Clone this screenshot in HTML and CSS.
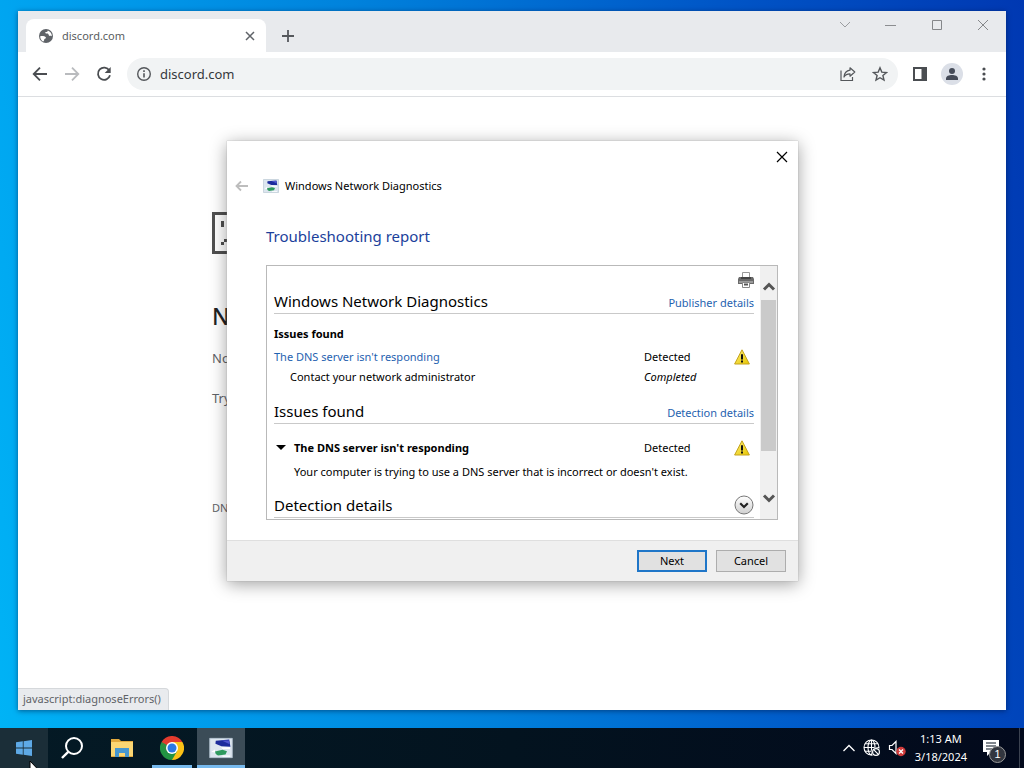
FILE: index.html
```html
<!DOCTYPE html>
<html lang="en">
<head>
<meta charset="utf-8">
<title>discord.com</title>
<link rel="stylesheet" href="styles.css">
</head>
<body>
<svg class="defs" aria-hidden="true">
  <defs>
    <linearGradient id="amber" x1="0" y1="0" x2="1" y2="1"><stop offset="0" stop-color="#fff27a"/><stop offset="1" stop-color="#e6c400"/></linearGradient>
    <linearGradient id="shine" x1="0" y1="0" x2="0" y2="1"><stop offset="0" stop-color="#fff"/><stop offset="1" stop-color="#cfcfcf"/></linearGradient>
    <symbol id="warning" viewBox="0 0 16 16">
      <path d="M8 .8 15.4 15H.6z" fill="url(#amber)" stroke="#c4a21c" stroke-width="1" stroke-linejoin="round"/>
      <path d="M7 5.200h2V10.400H7zM7 11.600h2v2H7z" fill="#111"/>
    </symbol>
    <symbol id="netdiag" viewBox="0 0 16 14">
      <path d="M.5.5h15v13H.5z" fill="#dce6ef" stroke="#b3c2cf" stroke-width=".6"/>
      <path d="M4.500 2.200 13.500 1.400l.8 4.800-6-.3-4-1.700z" fill="#1c2c9c"/>
      <path d="M8.500 2h4.800l.5 2.500z" fill="#4e55cf"/>
      <path d="M8 6.500h6v1.200H9z" fill="#fff"/>
      <path d="M4 9.300 9 8.200l3 .9-1 2.200-5 .7-1.500-1z" fill="#2f9a5e"/>
      <path d="M1.500 9.500 4 8v2zM9 12h5v.8H9z" fill="#fff"/>
    </symbol>
  </defs>
</svg>

<main class="desktop">
  <section class="browser" aria-label="Browser">
    <header class="tabstrip">
      <div class="tab">
        <svg class="i16" viewBox="0 0 16 16"><circle cx="8" cy="8" r="7" fill="#5f6368"/><path d="M2.200 8.300c2-.4 4.300-.2 5.300.8.9.9.3 1.500-.6 1.600-.9.200-.5 1.200-1 2.100-.2.400-.6.700-1 .6-1.700-1.100-2.800-3-2.700-5.100zM9.800 2.400c-.1 1.100-.9 1.600-1.900 1.600-.8 0-.9.800-.3 1.200.8.500 1.500 0 2.200.3 1 .5.600 1.700 1.500 2.200.8.400 1.800 0 2.500.6.300-2.700-1.500-5.100-4-5.900z" fill="#fff"/></svg>
        <span class="tab-name">discord.com</span>
        <button class="plain" aria-label="Close tab"><svg class="i10" viewBox="0 0 10 10"><path d="M1 1l8 8M9 1 1 9" stroke="#5f6368" stroke-width="1.500"/></svg></button>
      </div>
      <button class="plain add" aria-label="New tab"><svg class="i14" viewBox="0 0 14 14"><path d="M7 1v12M1 7h12" stroke="#55585c" stroke-width="1.800"/></svg></button>
      <div class="wincontrols">
        <button class="plain" aria-label="Search tabs"><svg class="i12" viewBox="0 0 12 12"><path d="M1 3l5 5 5-5" fill="none" stroke="#9b9da0"/></svg></button>
        <button class="plain" aria-label="Minimize"><svg class="i12" viewBox="0 0 12 12"><path d="M0 6.500h11" stroke="#8b8d90"/></svg></button>
        <button class="plain" aria-label="Maximize"><svg class="i12" viewBox="0 0 12 12"><path d="M1.500 1.500h9v9h-9z" fill="none" stroke="#85878a"/></svg></button>
        <button class="plain" aria-label="Close"><svg class="i12" viewBox="0 0 12 12"><path d="M1 1l10 10M11 1 1 11" stroke="#85878a"/></svg></button>
      </div>
    </header>

    <nav class="toolbar">
      <div class="navbuttons">
        <button class="plain" aria-label="Back"><svg class="i16" viewBox="0 0 16 16"><path d="M15 8H2M8 1.700 1.700 8 8 14.300" fill="none" stroke="#4a4d51" stroke-width="1.800"/></svg></button>
        <button class="plain" aria-label="Forward"><svg class="i16" viewBox="0 0 16 16"><path d="M1 8h13M8 1.700 14.300 8 8 14.300" fill="none" stroke="#b9bbbe" stroke-width="1.800"/></svg></button>
        <button class="plain" aria-label="Reload"><svg class="i16" viewBox="0 0 16 16"><path d="M13.300 4.500A6.100 6.100 0 1 0 14 9.300" fill="none" stroke="#4a4d51" stroke-width="1.800"/><path d="M14.700 1v6H8.700z" fill="#4a4d51"/></svg></button>
      </div>
      <div class="omnibox">
        <svg class="i16" viewBox="0 0 16 16"><circle cx="8" cy="8" r="6.300" fill="none" stroke="#54575b" stroke-width="1.400"/><path d="M8 7.200v4.200M8 4.300v1.600" stroke="#54575b" stroke-width="1.600"/></svg>
        <input class="url" aria-label="Address" value="discord.com">
        <button class="plain" aria-label="Share"><svg class="i16" viewBox="0 0 16 16"><path d="M1 4.500v10h11.500V11" fill="none" stroke="#54575b" stroke-width="1.200"/><path d="M10 1.800 14.800 6 10 10.200V7.900C7.200 7.900 5.300 8.800 4 11c.3-3.500 2.500-6.300 6-6.800z" fill="none" stroke="#54575b" stroke-width="1.200" stroke-linejoin="round"/></svg></button>
        <button class="plain" aria-label="Bookmark"><svg class="i16" viewBox="0 0 16 16"><path d="M8 1.800l1.800 4.300 4.700.4-3.600 3 1.100 4.600L8 11.700l-4 2.400 1.100-4.600-3.600-3 4.700-.4z" fill="none" stroke="#54575b" stroke-width="1.400"/></svg></button>
      </div>
      <div class="tools">
        <button class="plain" aria-label="Side panel"><svg class="i16" viewBox="0 0 16 16"><path d="M1 1h14v14H1zM3 3v10h6.500V3z" fill="#4a4d51" fill-rule="evenodd"/></svg></button>
        <button class="plain avatar" aria-label="Profile"><svg class="i14" viewBox="0 0 14 14"><circle cx="7" cy="4" r="3" fill="#454b58"/><path d="M1 13v-1.500C1 9 4 8 7 8s6 1 6 3.500V13z" fill="#454b58"/></svg></button>
        <button class="plain" aria-label="Menu"><svg class="i16" viewBox="0 0 16 16"><circle cx="8" cy="3" r="1.600" fill="#4a4d51"/><circle cx="8" cy="8" r="1.600" fill="#4a4d51"/><circle cx="8" cy="13" r="1.600" fill="#4a4d51"/></svg></button>
      </div>
    </nav>

    <article class="page">
      <svg class="sadface" viewBox="0 0 42 42"><path d="M1.500 1.500h39v39h-39z" fill="none" stroke="#505050" stroke-width="3"/><path d="M9 9h3v6H9zM30 9h3v6h-3zM9 30h3v3H9zM12 27h18v3H12zM30 30h3v3h-3z" fill="#505050"/></svg>
      <h1>N</h1>
      <p>No</p>
      <p>Try</p>
      <div class="code">DN</div>
    </article>
    <div class="status">javascript:diagnoseErrors()</div>
  </section>

  <section class="dialog" role="dialog" aria-label="Windows Network Diagnostics">
    <div class="titlebar">
      <button class="plain" aria-label="Close"><svg class="i12" viewBox="0 0 12 12"><path d="M1 1l10 10M11 1 1 11" stroke="#000" stroke-width="1.200"/></svg></button>
    </div>
    <div class="wizard">
      <button class="plain" aria-label="Back" disabled><svg class="i14" viewBox="0 0 14 14"><path d="M13 7H2M6 2.500 1.500 7 6 11.500" fill="none" stroke="#bdbdbd" stroke-width="1.800"/></svg></button>
      <svg class="i16" viewBox="0 0 16 14"><use href="#netdiag"/></svg>
      <span>Windows Network Diagnostics</span>
    </div>
    <h2>Troubleshooting report</h2>
    <div class="report">
      <div class="content">
        <div class="printrow">
          <button class="plain" aria-label="Print"><svg class="i16" viewBox="0 0 16 16"><path d="M4.500.5h7V6h-7z" fill="#fff" stroke="#999"/><path d="M1 5h14l1 2v5H0V7z" fill="#6a6a6a"/><path d="M3 5h10v2H3z" fill="#444"/><path d="M1 9.500h14v1H1z" fill="#ccc"/><path d="M4.500 10.500h7v5h-7z" fill="#fff" stroke="#888"/><path d="M6 11.500h4v2H6z" fill="#555"/></svg></button>
        </div>
        <div class="head"><h3>Windows Network Diagnostics</h3><a href="#publisher">Publisher details</a></div>
        <div class="summary">
          <h4>Issues found</h4>
          <div class="row"><a href="#dns">The DNS server isn't responding</a><span class="state">Detected</span><svg class="i16" viewBox="0 0 16 16"><use href="#warning"/></svg></div>
          <div class="row action"><span>Contact your network administrator</span><em class="state">Completed</em></div>
        </div>
        <div class="head"><h3>Issues found</h3><a href="#details">Detection details</a></div>
        <div class="issue">
          <div class="row"><strong><i class="caret"></i>The DNS server isn't responding</strong><span class="state">Detected</span><svg class="i16" viewBox="0 0 16 16"><use href="#warning"/></svg></div>
          <p>Your computer is trying to use a DNS server that is incorrect or doesn't exist.</p>
        </div>
        <div class="head"><h3>Detection details</h3><button class="plain" aria-label="Expand"><svg class="i20" viewBox="0 0 20 20"><circle cx="10" cy="10" r="9" fill="url(#shine)" stroke="#777"/><path d="M6.200 8.300 10 12l3.800-3.700" fill="none" stroke="#222" stroke-width="2.200"/></svg></button></div>
      </div>
      <div class="scrollbar">
        <svg class="i14" viewBox="0 0 14 14"><path d="M2 9.500 7 4.500l5 5" fill="none" stroke="#555" stroke-width="3"/></svg>
        <div class="thumb"></div>
        <svg class="i14" viewBox="0 0 14 14"><path d="M2 4.500l5 5 5-5" fill="none" stroke="#555" stroke-width="3"/></svg>
      </div>
    </div>
    <footer class="actions">
      <button class="push default">Next</button>
      <button class="push">Cancel</button>
    </footer>
  </section>
</main>

<footer class="taskbar">
  <button class="task start" aria-label="Start"><svg class="i16" viewBox="0 0 16 16"><path d="M0 2.300 6.800 1.300v6.300H0zM7.600 1.200 16 0v7.600H7.600zM0 8.400h6.800v6.300L0 13.700zM7.600 8.400H16V16l-8.400-1.200z" fill="#5ea9e6"/></svg></button>
  <button class="task" aria-label="Search"><svg class="i24" viewBox="0 0 24 24"><circle cx="14" cy="10" r="8" fill="none" stroke="#fff" stroke-width="2"/><path d="M8.200 15.800 2 22" stroke="#fff" stroke-width="2.400"/></svg></button>
  <button class="task" aria-label="File Explorer"><svg class="i24" viewBox="0 0 24 24"><path d="M1 3h8l2 2h12v16H1z" fill="#e2a93d"/><path d="M1 6h22v14H1z" fill="#fbd673"/><path d="M5 12h14v9h-4v-4H9v4H5z" fill="#4797cf"/></svg></button>
  <button class="task running" aria-label="Chrome"><svg class="i24" viewBox="0 0 48 48"><path d="M24 24 3.200 12A24 24 0 0 1 44.800 12z" fill="#e33b2e"/><path d="M24 24 44.800 12A24 24 0 0 1 24 48z" fill="#fbc116"/><path d="M24 24v24A24 24 0 0 1 3.200 12z" fill="#229342"/><path d="M24 12h20.800L34.400 30z" fill="#fbc116"/><path d="M3.200 12H44.800H24L13.600 30z" fill="#e33b2e"/><path d="M3.200 12 13.600 30 24 24z" fill="#229342"/><path d="M13.600 30 24 48 34.400 30z" fill="#229342"/><circle cx="24" cy="24" r="12" fill="#fff"/><circle cx="24" cy="24" r="9" fill="#2b78e4"/></svg></button>
  <button class="task running active" aria-label="Windows Network Diagnostics"><svg class="i24" viewBox="0 0 16 14"><use href="#netdiag"/></svg></button>
  <div class="tray">
    <button class="plain" aria-label="Show hidden icons"><svg class="i14" viewBox="0 0 14 14"><path d="M1.500 10 7 4.500l5.500 5.500" fill="none" stroke="#fff" stroke-width="1.300"/></svg></button>
    <button class="plain" aria-label="Network"><svg class="i18" viewBox="0 0 18 18"><g fill="none" stroke="#fff" stroke-width="1.100"><circle cx="8.500" cy="8.500" r="7.500"/><ellipse cx="8.500" cy="8.500" rx="3.500" ry="7.500"/><path d="M1 8.500h15M2 4.700h13M2 12.300h13M8.500 1v15"/></g><circle cx="13" cy="13" r="4.600" fill="#04101f"/><circle cx="13" cy="13" r="3.400" fill="none" stroke="#fff" stroke-width="1.200"/><path d="M10.700 10.700l4.600 4.600" stroke="#fff" stroke-width="1.200"/></svg></button>
    <button class="plain" aria-label="Volume"><svg class="i18" viewBox="0 0 18 18"><path d="M1.500 6.500H4l4-4v12l-4-4H1.500z" fill="none" stroke="#fff" stroke-width="1.200"/><circle cx="13" cy="12.500" r="4.700" fill="#cf3a3a"/><path d="M11 10.500l4 4M15 10.500l-4 4" stroke="#fff" stroke-width="1.300"/></svg></button>
    <div class="clock"><time>1:13 AM</time><time>3/18/2024</time></div>
    <button class="plain notify" aria-label="Notifications"><svg class="i18" viewBox="0 0 18 18"><path d="M1 1h16v12H9l-4 4v-4H1z" fill="#fff"/><path d="M4 4h10M4 7h10M4 10h6" stroke="#04101f" stroke-width="1.200"/></svg><span class="badge">1</span></button>
    <div class="peek"></div>
  </div>
  <svg class="cursor" viewBox="0 0 12 19"><path d="M1 1v16l4-4 2.500 5.500 2-1L7 12h4.500z" fill="#fff" stroke="#000"/></svg>
</footer>
</body>
</html>
```
FILE: styles.css
```css
* { box-sizing: border-box; }
html, body { height: 100%; margin: 0; }
body {
  display: flex;
  flex-direction: column;
  overflow: hidden;
  font: 11px/20px "Noto Sans", "Open Sans", sans-serif;
  color: #000;
  background: linear-gradient(80deg, #00b4f6 0%, #00a0ee 16%, #0082dc 42%, #0054c6 75%, #0038b2 100%);
}
h1, h2, h3, h4, p { margin: 0; font-weight: 400; }
a { color: #1f62b0; text-decoration: none; }
svg { display: block; flex: none; }
.defs { position: absolute; width: 0; height: 0; }
.i10 { width: 10px; height: 10px; }
.i12 { width: 12px; height: 12px; }
.i14 { width: 14px; height: 14px; }
.i16 { width: 16px; height: 16px; }
.i18 { width: 18px; height: 18px; }
.i20 { width: 20px; height: 20px; }
.i24 { width: 24px; height: 24px; }
.plain {
  display: flex;
  align-items: center;
  justify-content: center;
  padding: 0;
  border: 0;
  background: none;
}

.desktop { position: relative; flex: 1; min-height: 0; }

/* Browser window */
.browser {
  position: absolute;
  inset: 11px 18px 18px;
  display: flex;
  flex-direction: column;
  background: #fff;
  box-shadow: 0 1px 5px rgba(0, 20, 60, .55);
}
.tabstrip {
  display: flex;
  height: 41px;
  padding-left: 8px;
  background: #e8eaed;
}
.tab {
  display: flex;
  align-items: center;
  gap: 8px;
  width: 240px;
  margin-top: 8px;
  padding: 0 11px 0 12px;
  border-radius: 8px 8px 0 0;
  background: #fff;
  color: #5a5d61;
}
.tab-name { flex: 1; }
.add { width: 44px; padding-top: 8px; }
.wincontrols { display: flex; height: 28px; margin-left: auto; }
.wincontrols .plain { width: 46px; }
.toolbar {
  display: flex;
  align-items: center;
  height: 45px;
  padding: 0 14px;
  border-bottom: 1px solid #dcdee1;
}
.navbuttons { display: flex; gap: 16px; width: 95px; }
.omnibox {
  display: flex;
  flex: 1;
  align-items: center;
  gap: 16px;
  height: 32px;
  padding: 0 10px 0 9px;
  border-radius: 16px;
  background: #f1f3f4;
}
.url {
  flex: 1;
  min-width: 0;
  margin-left: -8px;
  padding: 0;
  border: 0;
  background: none;
  color: #35383c;
  font: inherit;
  font-size: 13px;
}
.tools { display: flex; align-items: center; gap: 13px; margin-left: 14px; }
.avatar { width: 22px; height: 22px; border-radius: 50%; background: #dbdfe7; }
.page { flex: 1; padding: 115px 0 0 194px; color: #5f6368; }
.sadface { width: 42px; height: 42px; }
.page h1 { margin: 46px 0 16px; color: #202124; font-size: 23px; line-height: 32px; font-weight: 500; }
.page p { margin-bottom: 20px; font-size: 13px; }
.code { margin-top: 90px; }
.status {
  align-self: flex-start;
  height: 22px;
  padding: 0 7px 0 5px;
  border: 1px solid #d5d8db;
  border-width: 1px 1px 0 0;
  border-radius: 0 4px 0 0;
  background: #e9ebee;
  color: #5f6368;
}

/* Diagnostics dialog */
.dialog {
  position: absolute;
  left: 227px;
  top: 141px;
  width: 571px;
  background: #fff;
  box-shadow: 0 0 1px #999, 0 3px 16px rgba(0, 0, 0, .38);
}
.titlebar { display: flex; justify-content: flex-end; height: 31px; padding-right: 10px; }
.wizard { display: flex; align-items: center; height: 28px; padding-left: 8px; }
.wizard svg { margin-right: 6px; }
.wizard .plain { margin-right: 8px; }
.dialog h2 { margin: 26px 0 19px 39px; color: #1b3f9b; font-size: 15px; line-height: 20px; }
.report {
  display: flex;
  height: 255px;
  margin: 0 20px 20px 39px;
  border: 1px solid #b9b9b9;
  overflow: hidden;
}
.content { flex: 1; padding: 5px 6px 0 7px; }
.printrow { display: flex; justify-content: flex-end; height: 17px; }
.head {
  display: flex;
  align-items: center;
  justify-content: space-between;
  height: 26px;
  border-bottom: 1px solid #c9c9c9;
}
.head a { padding-top: 5px; }
.head h3 { font-size: 15px; }
.summary { padding: 10px 0 13px; }
.summary h4 { margin-bottom: 3px; font-size: inherit; font-weight: 700; }
.row { display: grid; grid-template-columns: 1fr 90px 20px; align-items: center; height: 20px; }
.row.action { height: 18px; padding-left: 16px; }
.issue { padding: 14px 0 10px; }
.issue p { padding: 4px 0 0 20px; }
.caret {
  display: inline-block;
  margin: 0 8px 2px 2px;
  border: 5px solid transparent;
  border-top-color: #000;
  border-bottom: 0;
}
.scrollbar {
  display: flex;
  flex-direction: column;
  align-items: center;
  width: 17px;
  padding: 14px 0;
  background: #f0f0f0;
}
.thumb { width: 15px; height: 151px; margin: 6px 0 auto; background: #cacaca; }
.actions {
  display: flex;
  align-items: center;
  justify-content: flex-end;
  gap: 9px;
  height: 41px;
  padding-right: 12px;
  border-top: 1px solid #dfdfdf;
  background: #f0f0f0;
}
.push {
  width: 70px;
  height: 22px;
  padding: 0;
  border: 1px solid #adadad;
  background: #e1e1e1;
  color: #000;
  font: inherit;
  line-height: 18px;
}
.default { border: 2px solid #1f76c8; }

/* Taskbar */
.taskbar {
  position: relative;
  display: flex;
  gap: 1px;
  height: 40px;
  background: linear-gradient(90deg, #041a25, #03131f 50%, #02091c);
}
.task {
  display: flex;
  align-items: center;
  justify-content: center;
  width: 49px;
  padding: 0;
  border: 0;
  background: none;
}
.start { width: 48px; margin-right: -2px; background: #1b2e38; }
.running { background: linear-gradient(#76b9ed, #76b9ed) center bottom / 40px 3px no-repeat; }
.active { width: 48px; background: linear-gradient(#76b9ed, #76b9ed) center bottom / 48px 3px no-repeat #3b4c57; }
.tray { display: flex; align-items: center; gap: 7px; margin-left: auto; color: #fff; }
.clock { display: flex; flex-direction: column; align-items: center; margin: 0 8px 0 2px; line-height: 18px; }
.notify { position: relative; margin-right: 12px; }
.peek { align-self: stretch; width: 5px; border-left: 1px solid #3b4250; }
.badge {
  position: absolute;
  left: 7px;
  top: 7px;
  width: 17px;
  height: 17px;
  border: 1px solid #999;
  border-radius: 50%;
  background: #32363f;
  color: #fff;
  font-size: 11px;
  line-height: 15px;
}
.cursor { position: absolute; left: 29px; top: 32px; width: 12px; height: 19px; }
```
